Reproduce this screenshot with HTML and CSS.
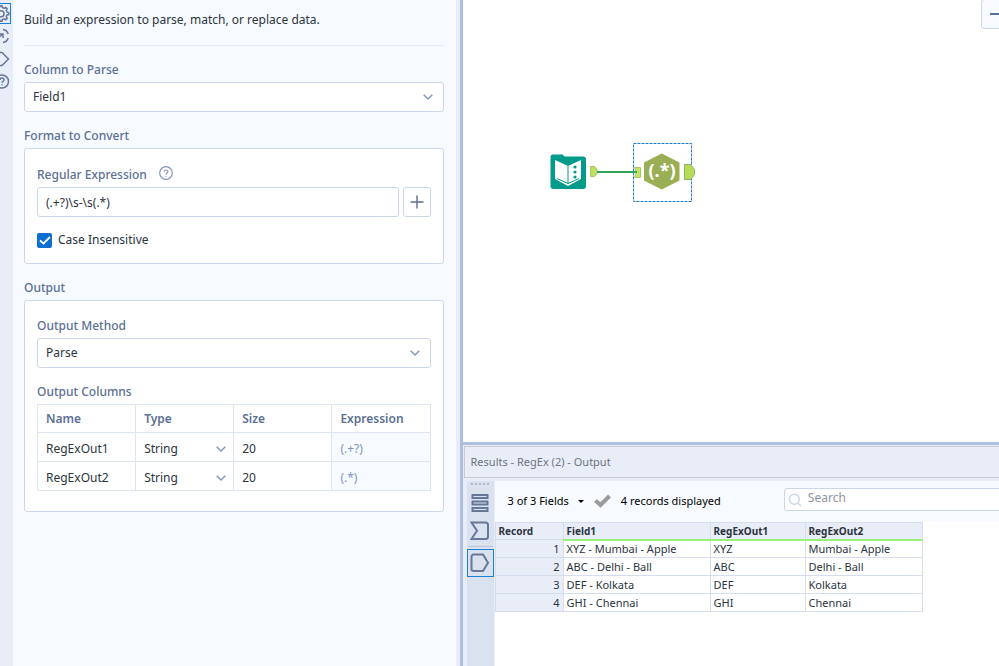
FILE: index.html
```html
<!DOCTYPE html>
<html lang="en">
<head>
  <meta charset="UTF-8">
  <title>RegEx - Configuration</title>
  <link rel="stylesheet" href="styles.css">
</head>
<body>
  <div class="app">
    <div class="side">
      <nav class="rail">
        <button class="rail-btn active" aria-label="Configuration">
          <svg width="20" height="20" viewBox="0 0 20 20"><path d="M8.6 3.5 9 1.8h2l.4 1.7 1.8.8 1.5-.9 1.5 1.5-.9 1.5.7 1.8 1.8.4v2l-1.8.4-.7 1.8.9 1.5-1.5 1.5-1.5-.9-1.8.7-.4 1.7H9l-.4-1.7-1.8-.7-1.5.9-1.5-1.5.9-1.5-.7-1.8-1.8-.4v-2L4 8.2l.7-1.8-.9-1.5 1.5-1.5 1.5.9z"/><circle cx="10" cy="9.8" r="3"/></svg>
        </button>
        <button class="rail-btn" aria-label="Navigation">
          <svg width="20" height="20" viewBox="0 0 20 20"><path d="M11 3.5a6.500 6.500 0 0 1 5.200 4.500M16.200 12a6.500 6.500 0 0 1-5.200 4.500M6 12l5-4M7 8h4v4"/></svg>
        </button>
        <button class="rail-btn" aria-label="Annotation">
          <svg width="20" height="20" viewBox="0 0 20 20"><path d="M4 3.5h6l6.500 6.500-6.500 6.500H4"/></svg>
        </button>
        <button class="rail-btn" aria-label="Help">
          <svg width="20" height="20" viewBox="0 0 20 20"><circle cx="10" cy="9.500" r="6.500"/><path d="M8 8c0-2.800 4-2.600 4-.2 0 1.500-2 1.500-2 3M10 12.300v1"/></svg>
        </button>
      </nav>

      <form class="config">
        <p class="intro">Build an expression to parse, match, or replace data.</p>

        <label class="label" for="column">Column to Parse</label>
        <select class="field" id="column"><option>Field1</option></select>

        <h2 class="label">Format to Convert</h2>
        <div class="box">
          <div class="label-row">
            <label class="label" for="regex">Regular Expression</label>
            <svg class="help" width="14" height="14" viewBox="0 0 14 14"><circle cx="7" cy="7" r="6.3"/><path d="M5.200 5.800c0-2.500 3.700-2.300 3.700-.2C8.900 7 7 7 7 8.500M7 9.800v1"/></svg>
          </div>
          <div class="regex-row">
            <input class="field" type="text" id="regex" value="(.+?)\s-\s(.*)">
            <button type="button" class="add" aria-label="Add">
              <svg width="14" height="14" viewBox="0 0 14 14"><path d="M7 .5v13M.5 7h13"/></svg>
            </button>
          </div>
          <label class="check"><input type="checkbox" checked>Case Insensitive</label>
        </div>

        <h2 class="label">Output</h2>
        <div class="box">
          <label class="label" for="method">Output Method</label>
          <select class="field" id="method"><option>Parse</option></select>

          <h3 class="label">Output Columns</h3>
          <table class="columns">
            <thead>
              <tr><th>Name</th><th>Type</th><th>Size</th><th>Expression</th></tr>
            </thead>
            <tbody>
              <tr>
                <td>RegExOut1</td>
                <td class="type"><select aria-label="Type of RegExOut1"><option>String</option></select></td>
                <td>20</td>
                <td class="expr">(.+?)</td>
              </tr>
              <tr>
                <td>RegExOut2</td>
                <td class="type"><select aria-label="Type of RegExOut2"><option>String</option></select></td>
                <td>20</td>
                <td class="expr">(.*)</td>
              </tr>
            </tbody>
          </table>
        </div>
      </form>
    </div>

    <main class="main">
      <div class="canvas">
        <button class="zoom-out" aria-label="Zoom out"></button>

        <svg class="node input-tool" width="50" height="40" viewBox="0 0 50 40">
          <path fill="#009b8a" d="M3 1.5h9.500l2 2H33a3 3 0 0 1 3 3V33a3 3 0 0 1-3 3H3.500a3 3 0 0 1-3-3V4A2.500 2.500 0 0 1 3 1.500z"/>
          <path fill="#fff" d="M5 7l13 6 13-6v19l-13 7-13-7z"/>
          <path fill="none" stroke="#009b8a" d="M18 13v18M7 25.500l11 5 11-5"/>
          <g fill="#009b8a"><circle cx="25" cy="14" r="1.600"/><circle cx="25" cy="19" r="1.600"/><circle cx="25" cy="24" r="1.600"/></g>
          <path fill="#bfe060" stroke="#a3c466" d="M40.500 13.500h4l2.500 3v4l-2.500 3h-4z"/>
        </svg>

        <div class="node wire"></div>

        <svg class="node regex-tool" width="64" height="60" viewBox="0 0 64 60">
          <rect class="selection" x=".5" y=".5" width="58" height="58"/>
          <path fill="#c5e468" stroke="#a3c466" d="M1.500 24.500h6v10h-6l2-5z"/>
          <path fill="none" stroke="#2fa457" stroke-width="2" d="M0 29h4"/>
          <path fill="#9aaf54" d="M28.700 10.500l17.800 9v18l-17.800 9L11 37.500v-18z"/>
          <text x="29" y="34" text-anchor="middle">(.*)</text>
          <path fill="#b6dc5c" stroke="#8fb552" d="M51.500 21.500h6l4 5v5l-4 5h-6z"/>
        </svg>
      </div>

      <section class="results">
        <h2 class="results-title">Results - RegEx (2) - Output</h2>
        <div class="results-body">
          <div class="results-rail">
            <div class="grip"></div>
            <button aria-label="Messages"><svg width="18" height="20" viewBox="0 0 18 20"><path d="M1.500 2h15v3h-15zM1.500 8.500h15v3h-15zM1.500 15h15v3h-15z"/></svg></button>
            <button aria-label="Input"><svg width="20" height="20" viewBox="0 0 20 20"><path d="M1.500 1.500h14A2.500 2.500 0 0 1 18 4v11.500a2.500 2.500 0 0 1-2.500 2.500h-14L7 9.800z"/></svg></button>
            <button class="active" aria-label="Output"><svg width="20" height="20" viewBox="0 0 20 20"><path d="M3.500 1.500H13l5 8.300-5 8.200H3.500a2 2 0 0 1-2-2V3.500a2 2 0 0 1 2-2z"/></svg></button>
          </div>
          <div class="results-content">
            <div class="results-toolbar">
              <button class="fields">3 of 3 Fields</button>
              <svg class="tick" width="17" height="14" viewBox="0 0 17 14"><path d="M1.500 6.500l5 4.500 9-9"/></svg>
              <span>4 records displayed</span>
              <div class="search">
                <svg width="14" height="14" viewBox="0 0 14 14"><circle cx="6.300" cy="6.300" r="5"/><path d="M10 10l3 3"/></svg>
                <input type="text" placeholder="Search" aria-label="Search">
              </div>
            </div>
            <table class="grid">
              <colgroup><col class="c-record"><col class="c-field"><col class="c-out1"><col class="c-out2"></colgroup>
              <thead>
                <tr><th>Record</th><th>Field1</th><th>RegExOut1</th><th>RegExOut2</th></tr>
              </thead>
              <tbody>
                <tr><td>1</td><td>XYZ - Mumbai - Apple</td><td>XYZ</td><td>Mumbai - Apple</td></tr>
                <tr><td>2</td><td>ABC - Delhi - Ball</td><td>ABC</td><td>Delhi - Ball</td></tr>
                <tr><td>3</td><td>DEF - Kolkata</td><td>DEF</td><td>Kolkata</td></tr>
                <tr><td>4</td><td>GHI - Chennai</td><td>GHI</td><td>Chennai</td></tr>
              </tbody>
            </table>
          </div>
        </div>
      </section>
    </main>
  </div>
</body>
</html>
```
FILE: styles.css
```css
* {
  box-sizing: border-box;
}

body {
  margin: 0;
  font-family: "Noto Sans", "Open Sans", sans-serif;
  font-size: 12px;
  line-height: 16px;
  color: #2c3440;
  background: #fff;
}

h2, h3, p {
  margin: 0;
}

button, input, select {
  font: inherit;
  color: inherit;
  margin: 0;
}

button {
  padding: 0;
  border: none;
  background: none;
}

svg {
  display: block;
  flex: none;
}

.app {
  display: grid;
  grid-template-columns: 46fr 54fr;
  min-height: 100vh;
}

.side {
  display: flex;
  min-width: 0;
  background: #f7faff;
  border-right: 4px solid #e9edf8;
}

/* left icon rail, docked half out of view */
.rail {
  display: flex;
  flex-direction: column;
  gap: 2px;
  width: 13px;
  padding-top: 3px;
  background: #e9edf8;
}

.rail-btn {
  display: flex;
  justify-content: flex-end;
  width: 11px;
  height: 21px;
  overflow: hidden;
}

.rail-btn.active {
  border: 1px solid #1a7fd6;
  border-left: none;
}

.rail-btn svg {
  margin-right: -1px;
  fill: none;
  stroke: #66779a;
  stroke-width: 1.5;
}

.config {
  flex: 1;
  min-width: 0;
  padding: 12px 12px 24px 11px;
}

.intro {
  padding-bottom: 17px;
  margin-bottom: 16px;
  border-bottom: 1px solid #e4eaf5;
}

.label {
  display: block;
  font-size: 12px;
  font-weight: 500;
  line-height: 16px;
  margin-bottom: 4px;
  color: #5c6f94;
}

.field {
  display: block;
  width: 100%;
  height: 30px;
  padding: 0 8px;
  border: 1px solid #ccd6ea;
  border-radius: 3px;
  background: #fff;
}

select {
  appearance: none;
  background: #fff url("data:image/svg+xml,%3Csvg xmlns='http://www.w3.org/2000/svg' width='10' height='6'%3E%3Cpath d='M.7.7 5 5 9.3.7' fill='none' stroke='%238295bd' stroke-width='1.4'/%3E%3C/svg%3E") no-repeat right 7px center;
}

select.field {
  background: #fff url("data:image/svg+xml,%3Csvg xmlns='http://www.w3.org/2000/svg' width='10' height='6'%3E%3Cpath d='M.7.7 5 5 9.3.7' fill='none' stroke='%238295bd' stroke-width='1.4'/%3E%3C/svg%3E") no-repeat right 10px center;
}

.config > .field {
  margin-bottom: 16px;
}

.box {
  padding: 17px 12px 15px;
  margin-bottom: 16px;
  border: 1px solid #ccd6ea;
  border-radius: 3px;
  background: #fff;
}

.box:last-child {
  padding-bottom: 20px;
  margin-bottom: 0;
}

.label-row {
  display: flex;
  gap: 12px;
}

.label-row .label {
  margin: 1px 0 4px;
}

.help {
  fill: none;
  stroke: #8295bd;
  stroke-width: 1.2;
}

.regex-row {
  display: flex;
  gap: 4px;
  margin-bottom: 15px;
}

.add {
  display: flex;
  flex: none;
  align-items: center;
  justify-content: center;
  width: 28px;
  height: 30px;
  border: 1px solid #ccd6ea;
  border-radius: 3px;
}

.add svg {
  stroke: #5c6f94;
  stroke-width: 1.4;
}

.check {
  display: flex;
  align-items: center;
  gap: 6px;
}

.check input {
  width: 15px;
  height: 15px;
  appearance: none;
  border-radius: 2px;
  background: #0f6fd0 url("data:image/svg+xml,%3Csvg xmlns='http://www.w3.org/2000/svg' width='12' height='9'%3E%3Cpath d='M1 4.500l3.500 3L11 1' fill='none' stroke='%23fff' stroke-width='1.800'/%3E%3C/svg%3E") no-repeat center;
}

.box > .field {
  margin-bottom: 16px;
}

.columns {
  width: 100%;
  table-layout: fixed;
  border-collapse: collapse;
}

.columns th,
.columns td {
  height: 28px;
  padding: 0 8px;
  text-align: left;
  border: 1px solid #dde4f2;
}

.columns th {
  font-weight: 600;
  color: #5c6f94;
}

.columns td {
  padding-top: 4px;
}

.columns .type {
  padding: 4px 0 0;
}

.columns select {
  display: block;
  width: 100%;
  height: 24px;
  padding: 0 8px;
  border: none;
}

.columns .expr {
  color: #8295bd;
  background: #f7faff;
}

.main {
  display: flex;
  flex-direction: column;
  min-width: 0;
  border-left: 3px solid #adbfe0;
}

.canvas {
  position: relative;
  flex: 1;
  min-height: 300px;
  overflow: hidden;
}

.node {
  position: absolute;
}

.input-tool {
  left: 87px;
  top: 153px;
}

.wire {
  left: 134px;
  top: 171px;
  width: 40px;
  height: 2px;
  background: #2fa457;
}

.regex-tool {
  left: 170px;
  top: 143px;
}

.regex-tool text {
  font-size: 18px;
  font-weight: 700;
  fill: #fff;
}

.selection {
  fill: none;
  stroke: #1f7ad0;
  stroke-dasharray: 3 1;
}

.zoom-out {
  position: absolute;
  top: -1px;
  right: -12px;
  width: 30px;
  height: 30px;
  border: 1px solid #ccd6ea;
  border-radius: 3px;
  background: #f7faff;
}

.zoom-out::before {
  content: "";
  display: block;
  width: 12px;
  height: 2px;
  margin: 0 auto;
  background: #5c6f94;
}

.results {
  display: flex;
  flex-direction: column;
  min-height: 224px;
  border-top: 3px solid #adbfe0;
  background: #e9edf8;
}

.results-title {
  margin: 1px 0 3px 1px;
  padding: 7px 6px;
  border: 1px solid #c9cbd0;
  border-right: none;
  font-size: 11px;
  font-weight: 400;
  color: #6e7480;
}

.results-body {
  display: flex;
  flex: 1;
  padding-left: 4px;
}

.results-rail {
  display: flex;
  flex-direction: column;
  align-items: center;
  width: 28px;
  border-radius: 4px 0 0 0;
  border-right: 1px solid #e9edf8;
  background: #dae1ef;
}

.grip {
  width: 18px;
  margin: 2px 0 4px;
  border-top: 2px dotted #b3b9c6;
}

.results-rail button {
  display: flex;
  align-items: center;
  justify-content: center;
  width: 27px;
  height: 28px;
}

.results-rail button.active {
  position: relative;
  margin-top: 4px;
  border: 1px solid #1a7fd6;
}

.results-rail button.active::before {
  content: "";
  position: absolute;
  top: -4px;
  left: 0;
  right: 0;
  height: 1px;
  background: #bcc3d2;
}

.results-rail svg {
  fill: none;
  stroke: #66779a;
  stroke-width: 2;
}

.results-content {
  flex: 1;
  min-width: 0;
  background: #fff;
}

.results-toolbar {
  display: flex;
  align-items: center;
  height: 41px;
  padding: 0 0 2px 13px;
  font-size: 11px;
  color: #000;
  white-space: nowrap;
  background: #f7faff;
}

.fields::after {
  content: "";
  display: inline-block;
  margin: 0 0 2px 9px;
  border: 3px solid transparent;
  border-top-color: #000;
  border-bottom: none;
}

.tick {
  margin: 0 10px;
  fill: none;
  stroke: #9b9b9b;
  stroke-width: 4;
}

.search {
  display: flex;
  flex: 1;
  align-items: center;
  gap: 6px;
  min-width: 0;
  height: 23px;
  margin: -2px -4px 0 63px;
  padding-left: 3px;
  border: 1px solid #ccd6ea;
  border-radius: 3px;
  background: #fff;
}

.search svg {
  fill: none;
  stroke: #ccd6ea;
  stroke-width: 1.5;
}

.search input {
  width: 100%;
  padding: 0 0 3px;
  border: none;
  font-size: 12px;
  background: none;
}

.search input::placeholder {
  color: #8f949d;
}

.grid {
  width: 427px;
  table-layout: fixed;
  border-collapse: collapse;
  font-size: 11px;
  line-height: 14px;
}

.c-record {
  width: 68px;
}

.c-field {
  width: 147px;
}

.c-out1 {
  width: 95px;
}

.c-out2 {
  width: 117px;
}

.grid th,
.grid td {
  height: 18px;
  padding: 0 3px;
  text-align: left;
  border: 1px solid #d5ddee;
}

.grid th {
  height: 17px;
  font-size: 10px;
  font-weight: 700;
  background: #e9edf8;
}

.grid th + th {
  border-bottom: 2px solid #99f07c;
}

.grid td:first-child {
  text-align: right;
  background: #e9edf8;
}
```
